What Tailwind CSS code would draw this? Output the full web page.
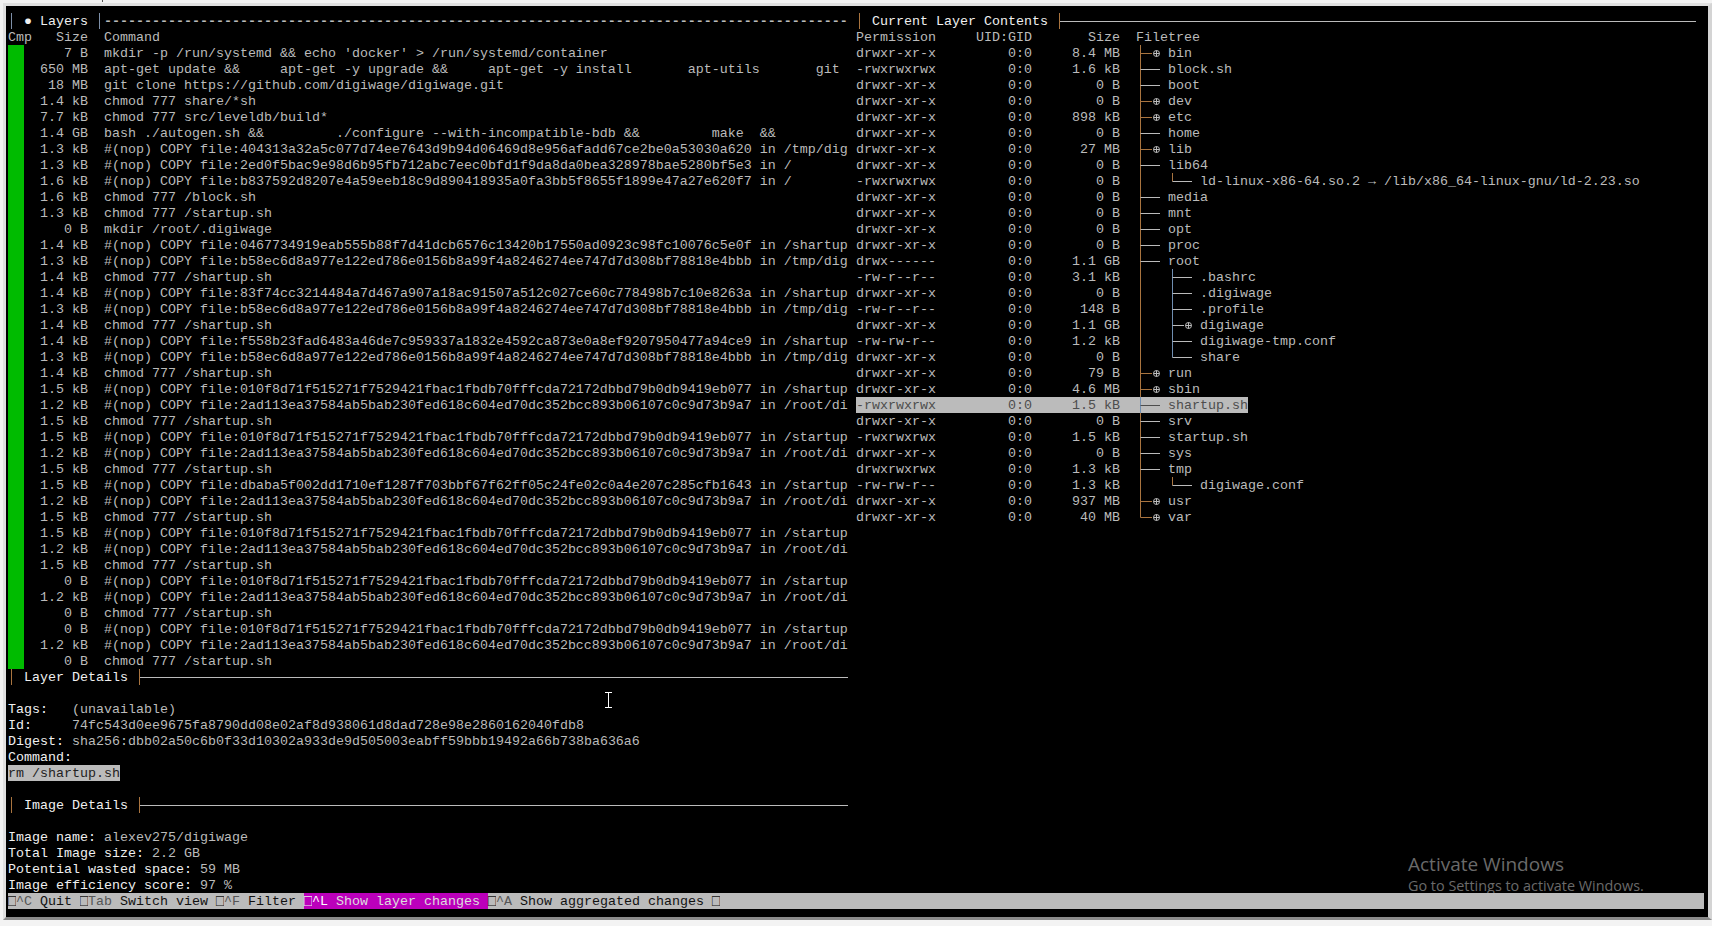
<!DOCTYPE html>
<html>
<head>
<meta charset="utf-8">
<title>dive</title>
<script src="https://cdn.jsdelivr.net/npm/@tailwindcss/browser@4"></script>
</head>
<body class="relative m-0 h-[926px] w-[1712px] overflow-hidden bg-[#f3f3f3]">
<span class="absolute left-[102px] top-0 h-[2px] w-px bg-[#555555]"></span>
<div class="flex h-[926px] w-[1712px] flex-col pt-[3px] pl-[3px] pb-[6px]">
<div class="relative flex flex-1 flex-col overflow-hidden whitespace-pre border-t-[3px] border-l-[3px] border-r-[4px] border-b-[3px] border-t-[#e0e0e0] border-l-[#e0e0e0] border-r-[#d4d4d4] border-b-[#8a8a8a] bg-black pt-[7px] pl-[2px] font-['Liberation_Mono',monospace] text-[13.333px] leading-[18px] text-[#bbbbbb]">
<div class="grid h-[880px] shrink-0 grid-cols-[840px_840px] gap-x-2">
<!-- LEFT -->
<div class="flex flex-col overflow-hidden">
<div class="flex h-4"><span class="ml-[3px] mr-1 h-4 w-px bg-[#7d8fa8]"></span><span class="text-[#f0f0f0]"> ● Layers </span><span class="ml-[3px] h-4 w-px bg-[#7d8fa8]"></span><span class="ml-[4px] w-[744px] overflow-hidden font-bold">---------------------------------------------------------------------------------------------</span></div>
<div class="h-4">Cmp   Size  Command</div>
<div class="h-4"><span class="inline-block h-4 w-4 bg-[#00bb00] align-top"></span>     7 B  mkdir -p /run/systemd &amp;&amp; echo 'docker' &gt; /run/systemd/container</div>
<div class="h-4"><span class="inline-block h-4 w-4 bg-[#00bb00] align-top"></span>  650 MB  apt-get update &amp;&amp;     apt-get -y upgrade &amp;&amp;     apt-get -y install       apt-utils       git</div>
<div class="h-4"><span class="inline-block h-4 w-4 bg-[#00bb00] align-top"></span>   18 MB  git clone https://github.com/digiwage/digiwage.git</div>
<div class="h-4"><span class="inline-block h-4 w-4 bg-[#00bb00] align-top"></span>  1.4 kB  chmod 777 share/*sh</div>
<div class="h-4"><span class="inline-block h-4 w-4 bg-[#00bb00] align-top"></span>  7.7 kB  chmod 777 src/leveldb/build*</div>
<div class="h-4"><span class="inline-block h-4 w-4 bg-[#00bb00] align-top"></span>  1.4 GB  bash ./autogen.sh &amp;&amp;         ./configure --with-incompatible-bdb &amp;&amp;         make  &amp;&amp;</div>
<div class="h-4"><span class="inline-block h-4 w-4 bg-[#00bb00] align-top"></span>  1.3 kB  #(nop) COPY file:404313a32a5c077d74ee7643d9b94d06469d8e956afadd67ce2be0a53030a620 in /tmp/dig</div>
<div class="h-4"><span class="inline-block h-4 w-4 bg-[#00bb00] align-top"></span>  1.3 kB  #(nop) COPY file:2ed0f5bac9e98d6b95fb712abc7eec0bfd1f9da8da0bea328978bae5280bf5e3 in /</div>
<div class="h-4"><span class="inline-block h-4 w-4 bg-[#00bb00] align-top"></span>  1.6 kB  #(nop) COPY file:b837592d8207e4a59eeb18c9d890418935a0fa3bb5f8655f1899e47a27e620f7 in /</div>
<div class="h-4"><span class="inline-block h-4 w-4 bg-[#00bb00] align-top"></span>  1.6 kB  chmod 777 /block.sh</div>
<div class="h-4"><span class="inline-block h-4 w-4 bg-[#00bb00] align-top"></span>  1.3 kB  chmod 777 /startup.sh</div>
<div class="h-4"><span class="inline-block h-4 w-4 bg-[#00bb00] align-top"></span>     0 B  mkdir /root/.digiwage</div>
<div class="h-4"><span class="inline-block h-4 w-4 bg-[#00bb00] align-top"></span>  1.4 kB  #(nop) COPY file:0467734919eab555b88f7d41dcb6576c13420b17550ad0923c98fc10076c5e0f in /shartup</div>
<div class="h-4"><span class="inline-block h-4 w-4 bg-[#00bb00] align-top"></span>  1.3 kB  #(nop) COPY file:b58ec6d8a977e122ed786e0156b8a99f4a8246274ee747d7d308bf78818e4bbb in /tmp/dig</div>
<div class="h-4"><span class="inline-block h-4 w-4 bg-[#00bb00] align-top"></span>  1.4 kB  chmod 777 /shartup.sh</div>
<div class="h-4"><span class="inline-block h-4 w-4 bg-[#00bb00] align-top"></span>  1.4 kB  #(nop) COPY file:83f74cc3214484a7d467a907a18ac91507a512c027ce60c778498b7c10e8263a in /shartup</div>
<div class="h-4"><span class="inline-block h-4 w-4 bg-[#00bb00] align-top"></span>  1.3 kB  #(nop) COPY file:b58ec6d8a977e122ed786e0156b8a99f4a8246274ee747d7d308bf78818e4bbb in /tmp/dig</div>
<div class="h-4"><span class="inline-block h-4 w-4 bg-[#00bb00] align-top"></span>  1.4 kB  chmod 777 /shartup.sh</div>
<div class="h-4"><span class="inline-block h-4 w-4 bg-[#00bb00] align-top"></span>  1.4 kB  #(nop) COPY file:f558b23fad6483a46de7c959337a1832e4592ca873e0a8ef9207950477a94ce9 in /shartup</div>
<div class="h-4"><span class="inline-block h-4 w-4 bg-[#00bb00] align-top"></span>  1.3 kB  #(nop) COPY file:b58ec6d8a977e122ed786e0156b8a99f4a8246274ee747d7d308bf78818e4bbb in /tmp/dig</div>
<div class="h-4"><span class="inline-block h-4 w-4 bg-[#00bb00] align-top"></span>  1.4 kB  chmod 777 /shartup.sh</div>
<div class="h-4"><span class="inline-block h-4 w-4 bg-[#00bb00] align-top"></span>  1.5 kB  #(nop) COPY file:010f8d71f515271f7529421fbac1fbdb70fffcda72172dbbd79b0db9419eb077 in /shartup</div>
<div class="h-4"><span class="inline-block h-4 w-4 bg-[#00bb00] align-top"></span>  1.2 kB  #(nop) COPY file:2ad113ea37584ab5bab230fed618c604ed70dc352bcc893b06107c0c9d73b9a7 in /root/di</div>
<div class="h-4"><span class="inline-block h-4 w-4 bg-[#00bb00] align-top"></span>  1.5 kB  chmod 777 /shartup.sh</div>
<div class="h-4"><span class="inline-block h-4 w-4 bg-[#00bb00] align-top"></span>  1.5 kB  #(nop) COPY file:010f8d71f515271f7529421fbac1fbdb70fffcda72172dbbd79b0db9419eb077 in /startup</div>
<div class="h-4"><span class="inline-block h-4 w-4 bg-[#00bb00] align-top"></span>  1.2 kB  #(nop) COPY file:2ad113ea37584ab5bab230fed618c604ed70dc352bcc893b06107c0c9d73b9a7 in /root/di</div>
<div class="h-4"><span class="inline-block h-4 w-4 bg-[#00bb00] align-top"></span>  1.5 kB  chmod 777 /startup.sh</div>
<div class="h-4"><span class="inline-block h-4 w-4 bg-[#00bb00] align-top"></span>  1.5 kB  #(nop) COPY file:dbaba5f002dd1710ef1287f703bbf67f62ff05c24fe02c0a4e207c285cfb1643 in /startup</div>
<div class="h-4"><span class="inline-block h-4 w-4 bg-[#00bb00] align-top"></span>  1.2 kB  #(nop) COPY file:2ad113ea37584ab5bab230fed618c604ed70dc352bcc893b06107c0c9d73b9a7 in /root/di</div>
<div class="h-4"><span class="inline-block h-4 w-4 bg-[#00bb00] align-top"></span>  1.5 kB  chmod 777 /startup.sh</div>
<div class="h-4"><span class="inline-block h-4 w-4 bg-[#00bb00] align-top"></span>  1.5 kB  #(nop) COPY file:010f8d71f515271f7529421fbac1fbdb70fffcda72172dbbd79b0db9419eb077 in /startup</div>
<div class="h-4"><span class="inline-block h-4 w-4 bg-[#00bb00] align-top"></span>  1.2 kB  #(nop) COPY file:2ad113ea37584ab5bab230fed618c604ed70dc352bcc893b06107c0c9d73b9a7 in /root/di</div>
<div class="h-4"><span class="inline-block h-4 w-4 bg-[#00bb00] align-top"></span>  1.5 kB  chmod 777 /startup.sh</div>
<div class="h-4"><span class="inline-block h-4 w-4 bg-[#00bb00] align-top"></span>     0 B  #(nop) COPY file:010f8d71f515271f7529421fbac1fbdb70fffcda72172dbbd79b0db9419eb077 in /startup</div>
<div class="h-4"><span class="inline-block h-4 w-4 bg-[#00bb00] align-top"></span>  1.2 kB  #(nop) COPY file:2ad113ea37584ab5bab230fed618c604ed70dc352bcc893b06107c0c9d73b9a7 in /root/di</div>
<div class="h-4"><span class="inline-block h-4 w-4 bg-[#00bb00] align-top"></span>     0 B  chmod 777 /startup.sh</div>
<div class="h-4"><span class="inline-block h-4 w-4 bg-[#00bb00] align-top"></span>     0 B  #(nop) COPY file:010f8d71f515271f7529421fbac1fbdb70fffcda72172dbbd79b0db9419eb077 in /startup</div>
<div class="h-4"><span class="inline-block h-4 w-4 bg-[#00bb00] align-top"></span>  1.2 kB  #(nop) COPY file:2ad113ea37584ab5bab230fed618c604ed70dc352bcc893b06107c0c9d73b9a7 in /root/di</div>
<div class="h-4"><span class="inline-block h-4 w-4 bg-[#00bb00] align-top"></span>     0 B  chmod 777 /startup.sh</div>
<div class="flex h-4"><span class="ml-[3px] h-4 w-px bg-[#a9743f]"></span><span class="ml-3 text-[#f0f0f0]">Layer Details</span><span class="ml-[11px] h-4 w-px bg-[#a9743f]"></span><span class="h-px flex-1 self-center bg-[#bbbbbb]"></span></div>
<div class="h-4"></div>
<div class="h-4"><span class="text-[#f0f0f0]">Tags:</span>   (unavailable)</div>
<div class="h-4"><span class="text-[#f0f0f0]">Id:</span>     74fc543d0ee9675fa8790dd08e02af8d938061d8dad728e98e2860162040fdb8</div>
<div class="h-4"><span class="text-[#f0f0f0]">Digest:</span> sha256:dbb02a50c6b0f33d10302a933de9d505003eabff59bbb19492a66b738ba636a6</div>
<div class="h-4"><span class="text-[#f0f0f0]">Command:</span></div>
<div class="h-4"><span class="inline-block h-4 bg-[#bbbbbb] align-top text-[#222222]">rm /shartup.sh</span></div>
<div class="h-4"></div>
<div class="flex h-4"><span class="ml-[3px] h-4 w-px bg-[#a9743f]"></span><span class="ml-3 text-[#f0f0f0]">Image Details</span><span class="ml-[11px] h-4 w-px bg-[#a9743f]"></span><span class="h-px flex-1 self-center bg-[#bbbbbb]"></span></div>
<div class="h-4"></div>
<div class="h-4"><span class="text-[#f0f0f0]">Image name:</span> alexev275/digiwage</div>
<div class="h-4"><span class="text-[#f0f0f0]">Total Image size:</span> 2.2 GB</div>
<div class="h-4"><span class="text-[#f0f0f0]">Potential wasted space:</span> 59 MB</div>
<div class="h-4"><span class="text-[#f0f0f0]">Image efficiency score:</span> 97 %</div>
</div>
<!-- RIGHT -->
<div class="flex flex-col">
<div class="flex h-4"><span class="ml-[3px] h-4 w-px bg-[#a9743f]"></span><span class="ml-3 text-[#f0f0f0]">Current Layer Contents</span><span class="ml-[11px] h-4 w-px bg-[#a9743f]"></span><span class="h-px flex-1 self-center bg-[#bbbbbb]"></span></div>
<div class="h-4">Permission     UID:GID       Size  Filetree</div>
<div class="flex h-4">drwxr-xr-x         0:0     8.4 MB  <svg width="32" height="16" class="shrink-0" fill="none" stroke="#a9743f"><path d="M4.5 0V16M4.5 8.5H16"/><circle cx="20.5" cy="8.5" r="3" stroke="#bbbbbb"/><path d="M17.5 8.5H23.5M20.5 5.5V11.5" stroke="#bbbbbb"/></svg>bin</div>
<div class="flex h-4">-rwxrwxrwx         0:0     1.6 kB  <svg width="32" height="16" class="shrink-0" fill="none"><path d="M4.5 0V16" stroke="#a9743f"/><path d="M4.5 8.5H24" stroke="#bbbbbb"/></svg>block.sh</div>
<div class="flex h-4">drwxr-xr-x         0:0        0 B  <svg width="32" height="16" class="shrink-0" fill="none"><path d="M4.5 0V16" stroke="#a9743f"/><path d="M4.5 8.5H24" stroke="#bbbbbb"/></svg>boot</div>
<div class="flex h-4">drwxr-xr-x         0:0        0 B  <svg width="32" height="16" class="shrink-0" fill="none" stroke="#a9743f"><path d="M4.5 0V16M4.5 8.5H16"/><circle cx="20.5" cy="8.5" r="3" stroke="#bbbbbb"/><path d="M17.5 8.5H23.5M20.5 5.5V11.5" stroke="#bbbbbb"/></svg>dev</div>
<div class="flex h-4">drwxr-xr-x         0:0     898 kB  <svg width="32" height="16" class="shrink-0" fill="none" stroke="#a9743f"><path d="M4.5 0V16M4.5 8.5H16"/><circle cx="20.5" cy="8.5" r="3" stroke="#bbbbbb"/><path d="M17.5 8.5H23.5M20.5 5.5V11.5" stroke="#bbbbbb"/></svg>etc</div>
<div class="flex h-4">drwxr-xr-x         0:0        0 B  <svg width="32" height="16" class="shrink-0" fill="none"><path d="M4.5 0V16" stroke="#a9743f"/><path d="M4.5 8.5H24" stroke="#bbbbbb"/></svg>home</div>
<div class="flex h-4">drwxr-xr-x         0:0      27 MB  <svg width="32" height="16" class="shrink-0" fill="none" stroke="#a9743f"><path d="M4.5 0V16M4.5 8.5H16"/><circle cx="20.5" cy="8.5" r="3" stroke="#bbbbbb"/><path d="M17.5 8.5H23.5M20.5 5.5V11.5" stroke="#bbbbbb"/></svg>lib</div>
<div class="flex h-4">drwxr-xr-x         0:0        0 B  <svg width="32" height="16" class="shrink-0" fill="none"><path d="M4.5 0V16" stroke="#a9743f"/><path d="M4.5 8.5H24" stroke="#bbbbbb"/></svg>lib64</div>
<div class="flex h-4">-rwxrwxrwx         0:0        0 B  <svg width="64" height="16" class="shrink-0" fill="none"><path d="M4.5 0V16" stroke="#a9743f"/><path d="M36.5 0V8.5" stroke="#a9743f"/><path d="M36.5 8.5H56" stroke="#bbbbbb"/></svg>ld-linux-x86-64.so.2 → /lib/x86_64-linux-gnu/ld-2.23.so</div>
<div class="flex h-4">drwxr-xr-x         0:0        0 B  <svg width="32" height="16" class="shrink-0" fill="none"><path d="M4.5 0V16" stroke="#a9743f"/><path d="M4.5 8.5H24" stroke="#bbbbbb"/></svg>media</div>
<div class="flex h-4">drwxr-xr-x         0:0        0 B  <svg width="32" height="16" class="shrink-0" fill="none"><path d="M4.5 0V16" stroke="#a9743f"/><path d="M4.5 8.5H24" stroke="#bbbbbb"/></svg>mnt</div>
<div class="flex h-4">drwxr-xr-x         0:0        0 B  <svg width="32" height="16" class="shrink-0" fill="none"><path d="M4.5 0V16" stroke="#a9743f"/><path d="M4.5 8.5H24" stroke="#bbbbbb"/></svg>opt</div>
<div class="flex h-4">drwxr-xr-x         0:0        0 B  <svg width="32" height="16" class="shrink-0" fill="none"><path d="M4.5 0V16" stroke="#a9743f"/><path d="M4.5 8.5H24" stroke="#bbbbbb"/></svg>proc</div>
<div class="flex h-4">drwx------         0:0     1.1 GB  <svg width="32" height="16" class="shrink-0" fill="none"><path d="M4.5 0V16" stroke="#a9743f"/><path d="M4.5 8.5H24" stroke="#bbbbbb"/></svg>root</div>
<div class="flex h-4">-rw-r--r--         0:0     3.1 kB  <svg width="64" height="16" class="shrink-0" fill="none"><path d="M4.5 0V16" stroke="#a9743f"/><path d="M36.5 0V16" stroke="#6f8db0"/><path d="M36.5 8.5H56" stroke="#bbbbbb"/></svg>.bashrc</div>
<div class="flex h-4">drwxr-xr-x         0:0        0 B  <svg width="64" height="16" class="shrink-0" fill="none"><path d="M4.5 0V16" stroke="#a9743f"/><path d="M36.5 0V16" stroke="#6f8db0"/><path d="M36.5 8.5H56" stroke="#bbbbbb"/></svg>.digiwage</div>
<div class="flex h-4">-rw-r--r--         0:0      148 B  <svg width="64" height="16" class="shrink-0" fill="none"><path d="M4.5 0V16" stroke="#a9743f"/><path d="M36.5 0V16" stroke="#6f8db0"/><path d="M36.5 8.5H56" stroke="#bbbbbb"/></svg>.profile</div>
<div class="flex h-4">drwxr-xr-x         0:0     1.1 GB  <svg width="64" height="16" class="shrink-0" fill="none"><path d="M4.5 0V16" stroke="#a9743f"/><path d="M36.5 0V16" stroke="#6f8db0"/><path d="M36.5 8.5H48" stroke="#bbbbbb"/><circle cx="52.5" cy="8.5" r="3" stroke="#bbbbbb"/><path d="M49.5 8.5H55.5M52.5 5.5V11.5" stroke="#bbbbbb"/></svg>digiwage</div>
<div class="flex h-4">-rw-rw-r--         0:0     1.2 kB  <svg width="64" height="16" class="shrink-0" fill="none"><path d="M4.5 0V16" stroke="#a9743f"/><path d="M36.5 0V16" stroke="#6f8db0"/><path d="M36.5 8.5H56" stroke="#bbbbbb"/></svg>digiwage-tmp.conf</div>
<div class="flex h-4">drwxr-xr-x         0:0        0 B  <svg width="64" height="16" class="shrink-0" fill="none"><path d="M4.5 0V16" stroke="#a9743f"/><path d="M36.5 0V8.5" stroke="#6f8db0"/><path d="M36.5 8.5H56" stroke="#bbbbbb"/></svg>share</div>
<div class="flex h-4">drwxr-xr-x         0:0       79 B  <svg width="32" height="16" class="shrink-0" fill="none" stroke="#a9743f"><path d="M4.5 0V16M4.5 8.5H16"/><circle cx="20.5" cy="8.5" r="3" stroke="#bbbbbb"/><path d="M17.5 8.5H23.5M20.5 5.5V11.5" stroke="#bbbbbb"/></svg>run</div>
<div class="flex h-4">drwxr-xr-x         0:0     4.6 MB  <svg width="32" height="16" class="shrink-0" fill="none" stroke="#a9743f"><path d="M4.5 0V16M4.5 8.5H16"/><circle cx="20.5" cy="8.5" r="3" stroke="#bbbbbb"/><path d="M17.5 8.5H23.5M20.5 5.5V11.5" stroke="#bbbbbb"/></svg>sbin</div>
<div class="flex h-4 w-[392px] bg-[#bbbbbb] text-[#4d4d4d]">-rwxrwxrwx         0:0     1.5 kB  <svg width="32" height="16" class="shrink-0" fill="none"><path d="M4.5 0V16" stroke="#6f8db0"/><path d="M4.5 8.5H24" stroke="#4d4d4d"/></svg>shartup.sh</div>
<div class="flex h-4">drwxr-xr-x         0:0        0 B  <svg width="32" height="16" class="shrink-0" fill="none"><path d="M4.5 0V16" stroke="#a9743f"/><path d="M4.5 8.5H24" stroke="#bbbbbb"/></svg>srv</div>
<div class="flex h-4">-rwxrwxrwx         0:0     1.5 kB  <svg width="32" height="16" class="shrink-0" fill="none"><path d="M4.5 0V16" stroke="#a9743f"/><path d="M4.5 8.5H24" stroke="#bbbbbb"/></svg>startup.sh</div>
<div class="flex h-4">drwxr-xr-x         0:0        0 B  <svg width="32" height="16" class="shrink-0" fill="none"><path d="M4.5 0V16" stroke="#a9743f"/><path d="M4.5 8.5H24" stroke="#bbbbbb"/></svg>sys</div>
<div class="flex h-4">drwxrwxrwx         0:0     1.3 kB  <svg width="32" height="16" class="shrink-0" fill="none"><path d="M4.5 0V16" stroke="#a9743f"/><path d="M4.5 8.5H24" stroke="#bbbbbb"/></svg>tmp</div>
<div class="flex h-4">-rw-rw-r--         0:0     1.3 kB  <svg width="64" height="16" class="shrink-0" fill="none"><path d="M4.5 0V16" stroke="#a9743f"/><path d="M36.5 0V8.5" stroke="#a9743f"/><path d="M36.5 8.5H56" stroke="#bbbbbb"/></svg>digiwage.conf</div>
<div class="flex h-4">drwxr-xr-x         0:0     937 MB  <svg width="32" height="16" class="shrink-0" fill="none" stroke="#a9743f"><path d="M4.5 0V16M4.5 8.5H16"/><circle cx="20.5" cy="8.5" r="3" stroke="#bbbbbb"/><path d="M17.5 8.5H23.5M20.5 5.5V11.5" stroke="#bbbbbb"/></svg>usr</div>
<div class="flex h-4">drwxr-xr-x         0:0      40 MB  <svg width="32" height="16" class="shrink-0" fill="none" stroke="#a9743f"><path d="M4.5 0V8.5H16"/><circle cx="20.5" cy="8.5" r="3" stroke="#bbbbbb"/><path d="M17.5 8.5H23.5M20.5 5.5V11.5" stroke="#bbbbbb"/></svg>var</div>
</div>
</div>
<!-- status bar -->
<div class="relative z-10 flex h-4 w-[1696px] shrink-0 bg-[#bbbbbb] text-[#111111]"><span class="text-[#555555]"><span class="inline-block w-2 scale-y-125 text-[#111111]">□</span>^C</span> Quit <span class="text-[#555555]"><span class="inline-block w-2 scale-y-125 text-[#111111]">□</span>Tab</span> Switch view <span class="text-[#555555]"><span class="inline-block w-2 scale-y-125 text-[#111111]">□</span>^F</span> Filter <span class="bg-[#bb00bb] text-[#dddddd]"><span class="inline-block w-2 scale-y-125 text-[#eeeeee]">□</span><span class="text-white">^L</span> Show layer changes </span><span class="text-[#555555]"><span class="inline-block w-2 scale-y-125 text-[#111111]">□</span>^A</span> Show aggregated changes <span class="inline-block w-2 scale-y-125">□</span></div>
<!-- I-beam mouse pointer -->
<svg class="absolute left-[599px] top-[686px]" width="8" height="17" fill="none" stroke="#ffffff"><path d="M0 .5H7M3.5 .5V16M0 15.5H7"/></svg>
<!-- Windows watermark -->
<div class="absolute left-[1402px] top-[846px] font-['Open_Sans',sans-serif] text-[#6a6a6a]"><div class="text-[19px] leading-6">Activate Windows</div><div class="text-[14.4px] leading-5">Go to Settings to activate Windows.</div></div>
</div>
</div>
</body>
</html>
